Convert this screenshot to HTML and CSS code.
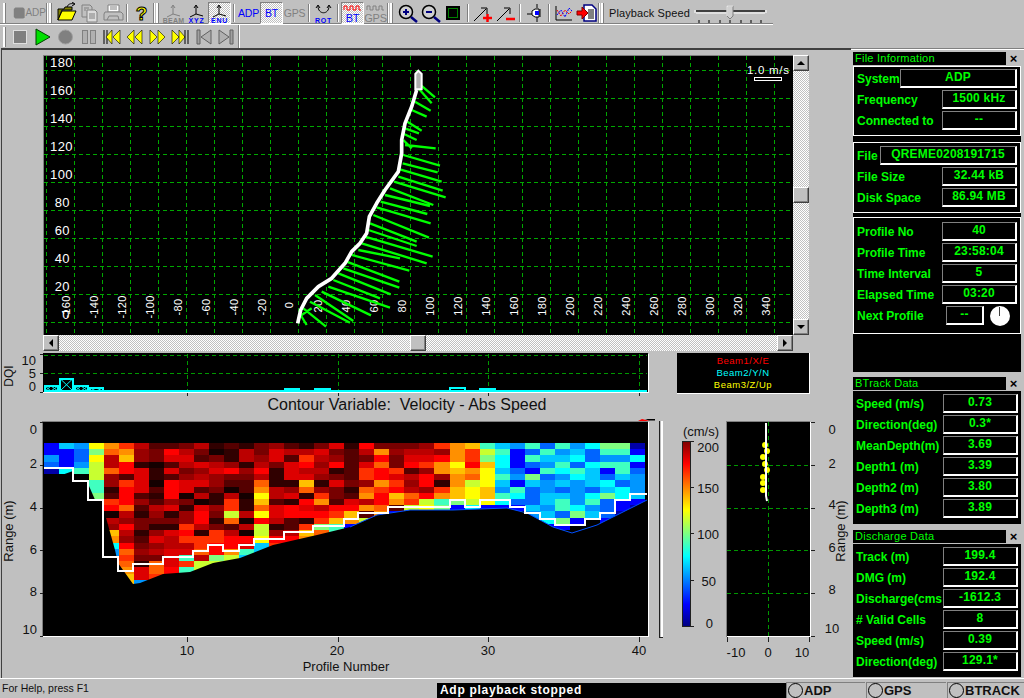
FILE: index.html
```html
<!DOCTYPE html>
<html lang="en">
<head>
<meta charset="utf-8">
<title>ADP Playback</title>
<link rel="stylesheet" href="styles.css">
</head>
<body>
<div class="app">
  <header class="toolbars">
    <div class="tb-row tb-one">
      <span class="grip grip-first"></span>
      <span class="btn btn-adp"><svg class="blob" viewBox="0 0 16 16"><path d="M3 1h10l2 2v11l-2 1H3l-2-2V3z" fill="#808080"/></svg><span class="dis">ADP</span></span>
      <span class="grip grip-double"></span>
      <span class="btn"><svg viewBox="0 0 23 22"><path d="M3 7h6l1-2h7v3H7L3 18z" fill="#808000" stroke="#000"/><path d="M3 18l4-9h14l-4 9z" fill="#ffff00" stroke="#000"/><path d="M12 5c1-3 4-4 7-3M17 0l3 2-3 2" fill="none" stroke="#000"/></svg></span>
      <span class="btn"><svg viewBox="0 0 23 22"><path d="M4 3h8l2 2v10H4z" fill="#c0c0c0" stroke="#808080"/><path d="M9 8h8l2 2v10H9z" fill="#dcdcdc" stroke="#808080"/><path d="M11 12h6M11 14h6M11 16h6M6 6h5M6 8h2" stroke="#808080"/></svg></span>
      <span class="btn"><svg viewBox="0 0 23 22"><path d="M7 3h11v7H7z" fill="#fff" stroke="#808080"/><path d="M4 10h16l2 2v6H3v-6z" fill="#c0c0c0" stroke="#808080"/><path d="M6 18l2-4h9l1 4M9 5h7M9 7h7" fill="none" stroke="#808080"/></svg></span>
      <span class="sep"></span>
      <span class="btn"><svg viewBox="0 0 23 22"><text class="qm" x="11.5" y="18">?</text></svg></span>
      <span class="grip grip-double"></span>
      <span class="btn"><svg viewBox="0 0 23 22"><path d="M11 4v8M11 12l-6 3M11 12l7 2M9 6l2-3 2 3" fill="none" stroke="#808080"/><text class="tag gray" x="11.5" y="21">BEAM</text></svg></span>
      <span class="btn"><svg viewBox="0 0 23 22"><path d="M11 4v8M11 12l-6 3M11 12l7 2M9 6l2-3 2 3" fill="none" stroke="#000"/><text class="tag" x="11.5" y="21">XYZ</text></svg></span>
      <span class="btn pressed"><svg viewBox="0 0 23 22"><path d="M11 4v8M11 12l-6 3M11 12l7 2M9 6l2-3 2 3" fill="none" stroke="#000"/><text class="tag" x="11.5" y="21">ENU</text></svg></span>
      <span class="sep"></span>
      <span class="btn blue">ADP</span>
      <span class="btn blue pressed">BT</span>
      <span class="btn gray-t">GPS</span>
      <span class="sep"></span>
      <span class="btn"><svg viewBox="0 0 23 22"><path d="M6 4c0 9 11 9 11 0M4 6l2-3 2 3M15 6l2-3 2 3" fill="none" stroke="#000"/><text class="tag" x="11.5" y="21">ROT</text></svg></span>
      <span class="sep"></span>
      <span class="btn pressed"><svg viewBox="0 0 23 22"><path d="M3 8V4h3v4h3V4h3v4h3V4h3v4h2" fill="none" stroke="#ff0000"/><text class="wave-t" x="11.5" y="20">BT</text></svg></span>
      <span class="btn"><svg viewBox="0 0 23 22"><path d="M3 8V4h3v4h3V4h3v4h3V4h3v4h2" fill="none" stroke="#808080"/><text class="wave-t gray" x="11.5" y="20">GPS</text></svg></span>
      <span class="grip grip-double"></span>
      <span class="btn"><svg viewBox="0 0 23 22"><circle cx="10" cy="10" r="6.5" fill="#d0d0d0" stroke="#000" stroke-width="1.5"/><path d="M7 10h6M10 7v6" stroke="#000080" stroke-width="2"/><path d="M15 15l6 5" stroke="#000080" stroke-width="2.5"/></svg></span>
      <span class="btn"><svg viewBox="0 0 23 22"><circle cx="10" cy="10" r="6.5" fill="#d0d0d0" stroke="#000" stroke-width="1.5"/><path d="M7 10h6" stroke="#000080" stroke-width="2"/><path d="M15 15l6 5" stroke="#000080" stroke-width="2.5"/></svg></span>
      <span class="btn"><svg viewBox="0 0 23 22"><rect x="4" y="4" width="14" height="14" fill="#000"/><rect x="6.5" y="6.5" width="9" height="9" fill="none" stroke="#00ff00" stroke-dasharray="1 1"/></svg></span>
      <span class="sep"></span>
      <span class="btn"><svg viewBox="0 0 23 22"><path d="M3 19L15 7M10 6h6v6" fill="none" stroke="#000"/><path d="M12 16h9M16.500 12v8" stroke="#ff0000" stroke-width="2.500"/></svg></span>
      <span class="btn"><svg viewBox="0 0 23 22"><path d="M3 19L15 7M10 6h6v6" fill="none" stroke="#000"/><path d="M12 17h9" stroke="#ff0000" stroke-width="2.500"/></svg></span>
      <span class="sep"></span>
      <span class="btn"><svg viewBox="0 0 23 22"><path d="M4 12h5" stroke="#000"/><path d="M9 9l3-2h4v8h-4l-3-2z" fill="#fff" stroke="#000"/><rect x="12" y="9" width="4" height="4" fill="#0000ff"/><path d="M14 2v4M14 15v5M17 7v8" stroke="#000"/></svg></span>
      <span class="sep"></span>
      <span class="btn"><svg viewBox="0 0 23 22"><path d="M4 4v14h16" fill="none" stroke="#000"/><path d="M5 8l4 6 4-6 4 4 3-3" fill="none" stroke="#ff0000" stroke-dasharray="2 1"/><path d="M5 13l4-5 4 7 4-9 3 3" fill="none" stroke="#0000ff" stroke-dasharray="2 1"/></svg></span>
      <span class="btn"><svg viewBox="0 0 23 22"><path d="M9 3h8l4 4v12H9z" fill="#fff" stroke="#000080" stroke-width="1.500"/><path d="M13 8h6M13 10h6M13 12h6M13 14h6M13 16h6" stroke="#000"/><path d="M2 9h5V5l6 6-6 6v-4H2z" fill="#ff0000" stroke="#800000"/></svg></span>
      <span class="grip grip-double"></span>
      <span class="speed-label">Playback Speed</span>
      <svg class="slider" viewBox="0 0 78 22"><path d="M3 9h69" stroke="#404040" stroke-width="2"/><path d="M3 11h69" stroke="#fff"/><path d="M2 8v3M73 8v3" stroke="#fff"/><path d="M34 4h6v10l-3 3-3-3z" fill="#d0d0d0" stroke="#808080"/><path d="M34 4h6M34 4v10" stroke="#fff"/><path d="M6 18v3M16 18v3M27 18v3M37 18v3M48 18v3M58 18v3M68 18v3" stroke="#000"/></svg>
    </div>
    <div class="tb-row tb-two">
      <span class="grip grip-first"></span>
      <span class="btn"><svg viewBox="0 0 23 22"><rect x="5.500" y="4.500" width="13" height="13" fill="#808080" stroke="#e0e0e0"/></svg></span>
      <span class="btn"><svg viewBox="0 0 23 22"><path d="M5 3l14 8-14 8z" fill="#00e000" stroke="#004000"/></svg></span>
      <span class="btn"><svg viewBox="0 0 23 22"><circle cx="11.500" cy="11" r="7" fill="#808080" stroke="#a0a0a0"/></svg></span>
      <span class="btn"><svg viewBox="0 0 23 22"><rect x="5.500" y="4.500" width="5" height="13" fill="#b0b0b0" stroke="#808080"/><rect x="13.500" y="4.500" width="5" height="13" fill="#b0b0b0" stroke="#808080"/></svg></span>
      <span class="btn"><svg viewBox="0 0 23 22"><path d="M4 4v14M7 4v14" stroke="#000"/><path d="M12 4v14l-6-7zM20 4v14l-7-7z" fill="#ffff00" stroke="#000" stroke-width=".6"/></svg></span>
      <span class="btn"><svg viewBox="0 0 23 22"><path d="M11 4v14L4 11zM19 4v14l-7-7z" fill="#ffff00" stroke="#000" stroke-width=".6"/></svg></span>
      <span class="btn"><svg viewBox="0 0 23 22"><path d="M4 4v14l7-7zM12 4v14l7-7z" fill="#ffff00" stroke="#000" stroke-width=".6"/></svg></span>
      <span class="btn"><svg viewBox="0 0 23 22"><path d="M3 4v14l7-7zM10 4v14l6-7z" fill="#ffff00" stroke="#000" stroke-width=".6"/><path d="M16 4v14M19 4v14" stroke="#000"/></svg></span>
      <span class="btn"><svg viewBox="0 0 23 22"><path d="M5 4v14h3V4z" fill="#a0a0a0" stroke="#606060"/><path d="M19 4v14l-10-7z" fill="#b0b0b0" stroke="#606060"/></svg></span>
      <span class="btn"><svg viewBox="0 0 23 22"><path d="M15 4v14h3V4z" fill="#a0a0a0" stroke="#606060"/><path d="M4 4v14l10-7z" fill="#b0b0b0" stroke="#606060"/></svg></span>
      <span class="sep-end"></span>
    </div>
  </header>

  <main class="main">
    <section class="work">
      <div class="chart-top">
        <svg class="vel-plot" viewBox="43 55 750 280">
          <rect x="43" y="55" width="750" height="280"/>
          <path class="frame-dark" d="M43.500 335V55.500H793"/>
          <path class="grid" d="M44 70.500H793M44 98.500H793M44 126.500H793M44 154.500H793M44 182.500H793M44 210.500H793M44 238.500H793M44 266.500H793M44 294.500H793M44 322.500H793"/>
          <path class="grid" d="M46.500 56V335M74.500 56V335M102.500 56V335M130.500 56V335M158.500 56V335M186.500 56V335M214.500 56V335M242.500 56V335M270.500 56V335M298.500 56V335M326.500 56V335M354.500 56V335M382.500 56V335M410.500 56V335M438.500 56V335M466.500 56V335M494.500 56V335M522.500 56V335M550.500 56V335M578.500 56V335M606.500 56V335M634.500 56V335M662.500 56V335M690.500 56V335M718.500 56V335M746.500 56V335M774.500 56V335"/>
          <g class="y-labels">
            <text x="73" y="67">180</text><text x="73" y="95">160</text><text x="73" y="123">140</text><text x="73" y="151">120</text><text x="73" y="179">100</text><text x="70" y="207">80</text><text x="70" y="235">60</text><text x="70" y="263">40</text><text x="70" y="291">20</text><text x="70" y="319">0</text>
          </g>
          <g class="x-labels">
            <text transform="translate(70 307) rotate(-90)">-160</text>
            <text transform="translate(98 307) rotate(-90)">-140</text>
            <text transform="translate(126 307) rotate(-90)">-120</text>
            <text transform="translate(154 307) rotate(-90)">-100</text>
            <text transform="translate(182 307) rotate(-90)">-80</text>
            <text transform="translate(210 307) rotate(-90)">-60</text>
            <text transform="translate(238 307) rotate(-90)">-40</text>
            <text transform="translate(266 307) rotate(-90)">-20</text>
            <text transform="translate(293 305) rotate(-90)">0</text>
            <text transform="translate(322 306) rotate(-90)">20</text>
            <text transform="translate(350 306) rotate(-90)">40</text>
            <text transform="translate(378 306) rotate(-90)">60</text>
            <text transform="translate(406 306) rotate(-90)">80</text>
            <text transform="translate(434 306) rotate(-90)">100</text>
            <text transform="translate(462 306) rotate(-90)">120</text>
            <text transform="translate(490 306) rotate(-90)">140</text>
            <text transform="translate(518 306) rotate(-90)">160</text>
            <text transform="translate(546 306) rotate(-90)">180</text>
            <text transform="translate(574 306) rotate(-90)">200</text>
            <text transform="translate(602 306) rotate(-90)">220</text>
            <text transform="translate(630 306) rotate(-90)">240</text>
            <text transform="translate(658 306) rotate(-90)">260</text>
            <text transform="translate(686 306) rotate(-90)">280</text>
            <text transform="translate(714 306) rotate(-90)">300</text>
            <text transform="translate(742 306) rotate(-90)">320</text>
            <text transform="translate(770 306) rotate(-90)">340</text>
          </g>
          <g transform="translate(270 60) scale(.33333)">
            <path class="vectors" d="M440 65L495 112M445 85L485 130M435 125L482 152M425 150L470 170M412 185L455 212M405 205L447 220M402 222L440 240M400 240L425 265M405 255L497 265M400 285L510 317M398 310L503 337M390 328L515 365M385 350L518 392M372 365L527 412M360 385L490 435M345 405L480 438M332 425L472 462M320 442L482 490M310 465L477 533M300 490L440 545M295 510L440 558M285 530L488 590M275 550L470 610M265 570L390 595M245 585L418 632M230 605L388 665M220 625L388 683M205 640L362 703M190 660L330 715M175 680L360 743M155 695L303 766M135 705L250 783M120 725L240 788M100 745L168 800M92 765L110 795M125 745L95 765"/>
            <path class="track" d="M83 790L92 750L110 715L145 680L185 655L225 610L245 575L270 550L290 520L298 470L320 430L345 390L385 335L395 280L395 240L405 190L425 140L440 90"/>
            <path class="boat" d="M436 88V42L445 32L455 42V88Z"/>
          </g>
          <text class="scale-t" x="747" y="74">1.0 m/s</text>
          <rect class="scale-bar" x="754.500" y="77.500" width="27" height="3"/>
        </svg>
        <div class="vscroll">
          <span class="arrow up"></span>
          <span class="track-fill"></span>
          <span class="thumb-v"></span>
          <span class="track-fill"></span>
          <span class="arrow down"></span>
        </div>
        <div class="hscroll">
          <span class="arrow left"></span>
          <span class="track-fill"></span>
          <span class="thumb-h"></span>
          <span class="track-fill"></span>
          <span class="arrow right"></span>
        </div>
      </div>

      <div class="dqi-row">
        <svg class="dqi" viewBox="2 351 675 46">
          <rect x="43" y="353" width="605" height="39"/>
          <path class="frame-light" d="M43 392.500H648.500V354"/>
          <path class="grid-s" d="M44 355.500H647M44 373.500H647M187.500 354V392M338.500 354V392M488.500 354V392M639.500 354V392"/>
          <path class="bars" d="M45 386H58V391H45ZM60 378.500H73V391H60ZM75 386H88V391H75ZM90 388H103V391H90ZM285 389H299V391H285ZM315 389H330V391H315ZM450 388H465V391H450ZM480 389H495V391H480Z"/>
          <path class="bars thin" d="M45 386L51 391L58 386M45 391L51 386L58 391M60 378.500L73 391M60 391L73 378.500M75 386L81 391L88 386M75 391L81 386L88 391M90 388L96 391L103 388"/>
          <path class="bars" d="M104 390.500H647"/>
          <path class="ticks" d="M40 354.500H43M40 373.500H43M40 392.500H43M187.500 393V396M338.500 393V396M488.500 393V396M639.500 393V396"/>
          <g class="dark-t">
            <text class="end" x="36" y="365">10</text><text class="end" x="36" y="378">5</text><text class="end" x="36" y="391">0</text>
            <text class="mid small" transform="translate(13 376) rotate(-90)">DQI</text>
          </g>
        </svg>
        <div class="legend">
          <span class="l-red">Beam1/X/E</span>
          <span class="l-cyan">Beam2/Y/N</span>
          <span class="l-yellow">Beam3/Z/Up</span>
        </div>
      </div>

      <h2 class="contour-title">Contour Variable:&nbsp; Velocity - Abs Speed</h2>

      <svg class="contour" viewBox="2 414 849 264">
        <defs>
          <linearGradient id="jet" x1="0" y1="0" x2="0" y2="1">
            <stop offset="0" stop-color="#7f0000"/>
            <stop offset=".12" stop-color="#ff0000"/>
            <stop offset=".37" stop-color="#ffff00"/>
            <stop offset=".62" stop-color="#00ffff"/>
            <stop offset=".88" stop-color="#0000ff"/>
            <stop offset="1" stop-color="#00007f"/>
          </linearGradient>
        </defs>
        <rect x="43" y="421" width="605" height="216"/>
        <g id="heat" class="heat"></g>
        <path class="bed" d="M43 476L59 476L73 471L73 476L84 478L89 486L96 502L103 507L110 532L115 550L118 563L133 584L140 583L163 574L190 572L213 563L240 558L273 545L317 535L350 527L377 515L410 510L453 510L507 508L527 513L553 527L572 533L597 525L647 500V636H43Z"/>
        <path class="edge" d="M350 527L377 515L410 510L453 510L507 508L527 513L553 527L572 533L597 525L647 500"/>
        <path class="contour-line" d="M44 468H73V481H88V500H103V557H118V571H133V564H163V557H193V551H208V545H223V551H239V545H254V539H284V532H313V526H344V519H358V513H388V507H450V500H465V507H480V500H510V507H525V513H540V519H555V525H585V519H600V513H615V500H630V494H647"/>
        <path class="frame-dark" d="M42.500 637V421.500H648"/>
        <path class="frame-light" d="M43 636.500H648.500V422"/>
        <path class="red-mark" d="M632 421h6l4-2 4 1 4 1z"/>
        <path class="black-mark" d="M645 419h10v1.500h-6z"/>
        <path class="strip" d="M660 421H659.500V637H663"/>
        <path class="strip-w" d="M662 421V637"/>
        <path class="ticks" d="M40 422.500H43M40 465.500H43M40 508.500H43M40 550.500H43M40 593.500H43M40 636.500H43M187.500 637V642M338.500 637V642M488.500 637V642M639.500 637V642"/>
        <g class="dark-t">
          <text class="end" x="37" y="434">0</text><text class="end" x="37" y="468">2</text><text class="end" x="37" y="511">4</text><text class="end" x="37" y="554">6</text><text class="end" x="37" y="596">8</text><text class="end" x="37" y="634">10</text>
          <text class="mid" transform="translate(13 531) rotate(-90)">Range (m)</text>
          <text class="mid" x="187" y="655">10</text><text class="mid" x="337" y="655">20</text><text class="mid" x="488" y="655">30</text><text class="mid" x="639" y="655">40</text>
          <text class="mid" x="346" y="671">Profile Number</text>
          <text class="mid" x="701" y="436">(cm/s)</text>
          <text class="end" x="719" y="452">200</text><text class="end" x="719" y="493">150</text><text class="end" x="719" y="539">100</text><text class="end" x="716" y="586">50</text><text class="end" x="713" y="628">0</text>
          <text class="mid" x="832" y="434">0</text><text class="mid" x="832" y="468">2</text><text class="mid" x="832" y="509">4</text><text class="mid" x="832" y="552">6</text><text class="mid" x="832" y="594">8</text><text class="mid" x="832" y="633">10</text>
          <text class="mid" transform="translate(845 531) rotate(-90)">Range (m)</text>
          <text class="mid" x="736" y="657">-10</text><text class="mid" x="768" y="657">0</text><text class="mid" x="802" y="657">10</text>
        </g>
        <rect class="cbar" x="682.500" y="441.500" width="8" height="185" fill="url(#jet)"/>
        <path class="ticks" d="M691 441.500H694M691 487.500H694M691 533.500H694M691 580.500H694M691 626.500H694"/>
        <rect x="726" y="421" width="84" height="216"/>
        <path class="grid-s" d="M727 465.500H810M727 508.500H810M727 550.500H810M727 593.500H810M768.500 422V636"/>
        <g class="yellow-dots">
          <circle cx="765" cy="445" r="3"/><circle cx="767" cy="451" r="3"/><circle cx="763" cy="457" r="3"/><circle cx="765" cy="464" r="3"/><circle cx="767" cy="470" r="3"/><circle cx="763" cy="477" r="3"/><circle cx="763" cy="483" r="3"/><circle cx="763" cy="490" r="3"/>
        </g>
        <path class="mini-track" d="M766 423V496L767 501"/>
        <path class="frame-dark" d="M726.500 637V421.500H810"/>
        <path class="frame-light" d="M727 636.500H810.500V422"/>
        <path class="ticks" d="M811 422.500H815M811 465.500H815M811 508.500H815M811 550.500H815M811 593.500H815M811 636.500H815M727.500 637V642M768.500 637V642M809.500 637V642"/>
      </svg>
    </section>

    <aside class="sidebar">
      <section class="panel panel-file">
        <div class="p-title"><span class="p-name">File Information</span><span class="p-close">×</span></div>
        <div class="p-body">
          <div class="group g-conn">
            <div class="row"><span class="lbl">System</span><span class="val val-wide">ADP</span></div>
            <div class="row"><span class="lbl">Frequency</span><span class="val">1500 kHz</span></div>
            <div class="row"><span class="lbl">Connected to</span><span class="val">--</span></div>
          </div>
          <div class="group g-file">
            <div class="row"><span class="lbl">File</span><span class="val val-file">QREME0208191715</span></div>
            <div class="row"><span class="lbl">File Size</span><span class="val">32.44 kB</span></div>
            <div class="row"><span class="lbl">Disk Space</span><span class="val">86.94 MB</span></div>
          </div>
          <div class="group g-prof">
            <div class="row"><span class="lbl">Profile No</span><span class="val">40</span></div>
            <div class="row"><span class="lbl">Profile Time</span><span class="val">23:58:04</span></div>
            <div class="row"><span class="lbl">Time Interval</span><span class="val">5</span></div>
            <div class="row"><span class="lbl">Elapsed Time</span><span class="val">03:20</span></div>
            <div class="row"><span class="lbl">Next Profile</span><span class="val val-next">--</span><svg class="clock" viewBox="0 0 22 22"><circle cx="11" cy="11" r="10" fill="#fff"/><path d="M10.500 11V2" stroke="#404040"/></svg></div>
          </div>
        </div>
      </section>
      <section class="panel panel-bt">
        <div class="p-title"><span class="p-name">BTrack Data</span><span class="p-close">×</span></div>
        <div class="p-body data">
          <div class="row"><span class="lbl">Speed (m/s)</span><span class="val">0.73</span></div>
          <div class="row"><span class="lbl">Direction(deg)</span><span class="val">0.3*</span></div>
          <div class="row"><span class="lbl">MeanDepth(m)</span><span class="val">3.69</span></div>
          <div class="row"><span class="lbl">Depth1 (m)</span><span class="val">3.39</span></div>
          <div class="row"><span class="lbl">Depth2 (m)</span><span class="val">3.80</span></div>
          <div class="row"><span class="lbl">Depth3 (m)</span><span class="val">3.89</span></div>
        </div>
      </section>
      <section class="panel panel-dis">
        <div class="p-title"><span class="p-name">Discharge Data</span><span class="p-close">×</span></div>
        <div class="p-body data">
          <div class="row"><span class="lbl">Track (m)</span><span class="val">199.4</span></div>
          <div class="row"><span class="lbl">DMG (m)</span><span class="val">192.4</span></div>
          <div class="row"><span class="lbl">Discharge(cms</span><span class="val">-1612.3</span></div>
          <div class="row"><span class="lbl"># Valid Cells</span><span class="val">8</span></div>
          <div class="row"><span class="lbl">Speed (m/s)</span><span class="val">0.39</span></div>
          <div class="row"><span class="lbl">Direction(deg)</span><span class="val">129.1*</span></div>
        </div>
      </section>
    </aside>
  </main>

  <footer class="status">
    <span class="st-help">For Help, press F1</span>
    <span class="st-msg">Adp playback stopped</span>
    <span class="st-pane st-adp"><i class="led"></i>ADP</span>
    <span class="st-pane st-gps"><i class="led"></i>GPS</span>
    <span class="st-pane st-bt"><i class="led"></i>BTRACK</span>
  </footer>
</div>
<script src="heatmap.js"></script>
</body>
</html>
```

FILE: styles.css
```css
* { box-sizing: border-box; }
html, body { margin: 0; padding: 0; }
body {
  width: 1024px;
  height: 698px;
  overflow: hidden;
  background: #c0c0c0;
  font-family: "Liberation Sans", Arial, sans-serif;
  color: #000;
}
.app { display: flex; flex-direction: column; width: 1024px; height: 698px; }

/* toolbars */
.toolbars { height: 48px; flex: none; }
.tb-row { display: flex; align-items: center; }
.tb-one {
  height: 25px;
  width: 773px;
  padding-top: 1px;
  border-bottom: 1px solid #ffffff;
  box-shadow: inset 0 -1px 0 #808080;
}
.tb-two { height: 23px; }
.btn {
  flex: none;
  width: 23px;
  height: 22px;
  display: flex;
  align-items: center;
  justify-content: center;
  font-size: 10.500px;
  letter-spacing: -.2px;
}
.btn svg { width: 23px; height: 22px; display: block; }
.btn-adp { width: 35px; margin-left: 3px; justify-content: flex-start; padding-left: 2px; }
.btn-adp .blob { width: 16px; height: 16px; }
.dis { color: #808080; font-size: 10px; letter-spacing: 0; }
.pressed {
  border: 1px solid;
  border-color: #808080 #ffffff #ffffff #808080;
  background-color: #c0c0c0;
  background-image: conic-gradient(#ffffff 25%, #c0c0c0 0 50%, #ffffff 0 75%, #c0c0c0 0);
  background-size: 2px 2px;
}
.pressed svg { margin: -1px; flex: none; }
.blue { color: #0000ff; }
.gray-t { color: #808080; }
.grip { flex: none; height: 20px; }
.grip-first { margin-left: 3px; border-left: 2px solid #fff; border-right: 1px solid #808080; width: 3px; margin-right: 2px; }
.grip-double {
  width: 8px;
  margin-right: 1px;
  background:
    linear-gradient(90deg, #808080 0 1px, #fff 1px 2px, #c0c0c0 2px 3px, #fff 3px 5px, #808080 5px 6px, transparent 6px);
}
.sep { flex: none; width: 2px; height: 18px; margin: 0 2px; border-left: 1px solid #808080; border-right: 1px solid #fff; }
.sep-end { flex: none; width: 2px; height: 23px; border-left: 1px solid #808080; border-right: 1px solid #fff; }
.speed-label { flex: none; font-size: 11px; letter-spacing: .1px; margin-left: 2px; width: 84px; white-space: nowrap; color: #111; }
.slider { flex: none; width: 78px; height: 22px; }
.qm { font: bold 19px "Liberation Sans", sans-serif; fill: #ffff00; stroke: #000; stroke-width: 1; text-anchor: middle; }
.tag { font: bold 7px "Liberation Sans", sans-serif; fill: #0000ff; text-anchor: middle; letter-spacing: .8px; }
.tag.gray { fill: #808080; letter-spacing: .2px; }
.wave-t { font: 11px "Liberation Sans", sans-serif; fill: #0000ff; text-anchor: middle; }
.wave-t.gray { fill: #808080; }

/* main */
.main { display: flex; flex: none; height: 630px; }
.work {
  flex: none;
  width: 850px;
  margin-left: 1px;
  border-top: 2px solid #404040;
  border-left: 1px solid #404040;
  display: flex;
  flex-direction: column;
}
.chart-top {
  margin: 5px 0 0 41px;
  display: grid;
  grid-template-columns: 750px 16px;
  grid-template-rows: 280px 16px;
}
.vel-plot { display: block; width: 750px; height: 280px; grid-column: 1; grid-row: 1; }
.vel-plot text { font-family: "Liberation Sans", Arial, sans-serif; fill: #fff; }
.y-labels text { font-size: 13px; text-anchor: end; letter-spacing: .4px; }
.x-labels text { font-size: 11px; text-anchor: middle; letter-spacing: .3px; }
.scale-t { font-size: 11.500px; letter-spacing: .7px; }
.scale-bar { fill: #000; stroke: #fff; }
.grid { fill: none; stroke: #00a800; stroke-dasharray: 4 3; shape-rendering: crispEdges; }
.grid-s { fill: none; stroke: #009800; stroke-dasharray: 4 3; shape-rendering: crispEdges; }
.vectors { fill: none; stroke: #00ff00; stroke-width: 7; }
.track { fill: none; stroke: #fff; stroke-width: 11; stroke-linejoin: round; }
.boat { fill: #b0b0b0; stroke: #fff; stroke-width: 6; }
.frame-dark { fill: none; stroke: #808080; shape-rendering: crispEdges; }
.frame-light { fill: none; stroke: #fff; stroke-width: 1; shape-rendering: crispEdges; }
.vscroll {
  grid-column: 2;
  grid-row: 1;
  width: 16px;
  display: flex;
  flex-direction: column;
}
.hscroll {
  grid-column: 1;
  grid-row: 2;
  display: flex;
  height: 16px;
}
.track-fill {
  flex: 1;
  background-color: #c0c0c0;
  background-image: conic-gradient(#ffffff 25%, #c0c0c0 0 50%, #ffffff 0 75%, #c0c0c0 0);
  background-size: 2px 2px;
}
.arrow, .thumb-v, .thumb-h {
  flex: none;
  background: #c0c0c0;
  border: 1px solid;
  border-color: #ffffff #404040 #404040 #ffffff;
  box-shadow: inset -1px -1px 0 #808080;
  position: relative;
}
.arrow { width: 16px; height: 16px; }
.thumb-v { height: 16px; width: 16px; }
.thumb-h { width: 16px; height: 16px; }
.vscroll .track-fill:first-of-type { flex: 0 0 117px; }
.hscroll .track-fill:first-of-type { flex: 0 0 352px; }
.arrow::before {
  content: "";
  position: absolute;
  left: 50%;
  top: 50%;
  border: 4px solid transparent;
}
.arrow.up::before { border-bottom-color: #000; transform: translate(-50%, -75%); }
.arrow.down::before { border-top-color: #000; transform: translate(-50%, -25%); }
.arrow.left::before { border-right-color: #000; transform: translate(-75%, -50%); }
.arrow.right::before { border-left-color: #000; transform: translate(-25%, -50%); }

/* DQI */
.dqi-row { display: flex; height: 46px; flex: none; }
.dqi { display: block; width: 675px; height: 46px; flex: none; }
.bars { fill: none; stroke: #00ffff; stroke-width: 2; shape-rendering: crispEdges; }
.bars.thin { stroke-width: 1; shape-rendering: auto; }
.ticks { fill: none; stroke: #202020; shape-rendering: crispEdges; }
.dark-t text { font: 13px "Liberation Sans", Arial, sans-serif; fill: #111; }
.dark-t .small { font-size: 12px; }
.dark-t .end { text-anchor: end; }
.dark-t .mid { text-anchor: middle; }
.legend {
  flex: none;
  width: 133px;
  height: 41px;
  margin-top: 2px;
  background: #000;
  border-right: 1px solid #fff;
  border-bottom: 1px solid #fff;
  display: flex;
  flex-direction: column;
  align-items: center;
  justify-content: center;
  font-size: 9.500px;
  line-height: 12px;
  letter-spacing: .5px;
}
.l-red { color: #ff0000; }
.l-cyan { color: #00ffff; }
.l-yellow { color: #ffff00; }
.contour-title {
  flex: none;
  margin: 0;
  height: 17px;
  width: 810px;
  text-align: center;
  font-size: 16px;
  font-weight: normal;
  line-height: 15px;
  color: #111;
}
.contour { display: block; width: 849px; height: 264px; flex: none; }
.heat rect { shape-rendering: crispEdges; }
.bed { fill: #000; }
.edge { fill: none; stroke: #0050ff; stroke-width: 1; }
.contour-line { fill: none; stroke: #fff; stroke-width: 2; shape-rendering: crispEdges; }
.red-mark { fill: #ff0000; }
.black-mark { fill: #000; }
.strip { fill: none; stroke: #202020; shape-rendering: crispEdges; }
.strip-w { fill: none; stroke: #fff; stroke-width: 2; shape-rendering: crispEdges; }
.cbar { stroke: #202020; }
.yellow-dots circle { fill: #ffff00; }
.mini-track { fill: none; stroke: #fff; stroke-width: 2; }

/* sidebar */
.sidebar {
  flex: none;
  width: 173px;
  padding: 3px 3px 0 2px;
  border-top: 1px solid #808080;
  box-shadow: inset 0 1px 0 #fff;
  display: flex;
  flex-direction: column;
}
.panel { width: 168px; flex: none; }
.panel-file { height: 320px; }
.panel-bt { height: 147px; margin-top: 5px; }
.panel-dis { height: 147px; margin-top: 6px; }
.p-title { display: flex; height: 14px; border-bottom: 1px solid #c0c0c0; }
.p-name {
  flex: 1;
  background: #000;
  color: #00ff00;
  font-size: 11px;
  line-height: 13px;
  padding-left: 2px;
  letter-spacing: .25px;
}
.p-close { flex: none; width: 15px; text-align: center; font-weight: bold; font-size: 13px; line-height: 13px; }
.p-body { background: #000; height: calc(100% - 14px); }
.group { border: 1px solid #fff; padding: 2px 3px 0 3px; margin-bottom: 6px; }
.g-conn { height: 70px; }
.g-file { height: 71px; padding-top: 3px; margin-bottom: 4px; }
.g-prof { height: 117px; padding-top: 4px; margin-bottom: 0; }
.row {
  display: flex;
  align-items: center;
  justify-content: space-between;
  height: 19px;
  margin-bottom: 2px;
}
.lbl, .val {
  color: #00ff00;
  font-size: 12px;
  font-weight: bold;
  white-space: nowrap;
}
.val {
  flex: none;
  width: 75px;
  height: 19px;
  margin-left: auto;
  text-align: center;
  line-height: 15px;
  letter-spacing: .2px;
  border: 1px solid;
  border-color: #808080 #fff #fff #808080;
  border-width: 1px 2px 2px 1px;
}
.val-wide { width: 117px; }
.val-file { width: 137px; }
.val-next { width: 38px; margin-right: 5px; }
.clock { width: 22px; height: 22px; flex: none; margin-right: 6px; }
.data { padding: 3px 0 0 3px; }
.data .row { padding-right: 3px; }

/* status */
.status { display: flex; flex: none; height: 20px; border-top: 1px solid #fff; }
.st-help { flex: none; width: 437px; font-size: 10.500px; line-height: 19px; padding-left: 2px; color: #111; }
.st-msg {
  flex: none;
  width: 349px;
  height: 15px;
  margin-top: 4px;
  background: #000;
  color: #fff;
  font-weight: bold;
  font-size: 12px;
  letter-spacing: .7px;
  line-height: 15px;
  padding-left: 3px;
}
.st-pane {
  flex: none;
  height: 16px;
  margin-top: 3px;
  display: flex;
  align-items: center;
  gap: 1px;
  font-weight: bold;
  font-size: 13px;
  border-top: 1px solid #808080;
  border-left: 1px solid #808080;
  padding-left: 1px;
  color: #111;
}
.st-adp { width: 79px; }
.st-gps { width: 80px; margin-left: 1px; }
.st-bt { width: 78px; margin-left: 1px; }
.led { display: block; width: 15px; height: 15px; border: 1px solid #000; border-radius: 50%; flex: none; }
```

FILE: heatmap.js
```js
// Velocity contour: one letter per cell, coloured on a jet ramp.
var palette = {
  a: "#0000a8", b: "#0000ff", c: "#0064ff", d: "#0096ff", e: "#00c8ff", f: "#00ffff",
  g: "#40ffc0", h: "#80ff80", i: "#c8ff30", j: "#ffff00", k: "#ffc000", l: "#ff9000",
  m: "#ff6000", n: "#ff3000", o: "#ff0000", p: "#dd0000", q: "#bb0000", r: "#990000",
  s: "#770000", t: "#550000", u: "#300000", v: "#140000"
};
var rows = [
  "bedjlnqttsqutusrtusp" + "uosssrnlkgedgcgdfhha",
  "bbchmlrsoqsvuqspqqps" + "tqlrqqrlnigbcgdecggb",
  "dbcjqkrspptsuqrptnqr" + "tsosppolnhfbgeefcddf",
  "cbdiqouvtqpqruqsporo" + "tpmsonljokfbcdgcfggb",
  "afgimopupsrporoupqqu" + "tnontrlkljecbgfgebgc",
  "...irtputrqrssqupprs" + "tnopqorlmjgdhcdfeced",
  "...grnpvopprttmuukup" + "srlnroulijebededefcd",
  "...guoptoptsvtlqrmrs" + "umnoqrnkjkdgcdcdcefd",
  "...htotuovquqvjqpuns" + "tlokmolkjkgfceedfhfe",
  "....nortrsvunuktuolt" + "pqolnighijfccegdgcbb",
  "....omtqpuprnumpopqo" + "olmtijhbfbbbedgfdcba",
  "....vqururosiqjpooon" + "ktlbaaa.....dechecaa",
  "....qrsssroumvoqtunk" + "lia.........dfhb.b..",
  "....rosuunqstqiutnhg" + "b...........dbb.....",
  "....kqurpounqvirqkmg",
  "....lrtpqnnnoojoolnh",
  "....fosrqqnoopenokif",
  "....dmrqppmolgelkhfe",
  "....dnsspgqhieehgfed",
  "....dmumpniigg",
  "....dlpmogig",
  "....dkpnia",
  "....akda"
];
var heat = document.getElementById("heat");
var NS = "http://www.w3.org/2000/svg";
rows.forEach(function (row, r) {
  for (var c = 0; c < row.length; c++) {
    var colour = palette[row[c]];
    if (!colour) continue;
    var cell = document.createElementNS(NS, "rect");
    var x0 = Math.round(43.7 + 15.03 * c);
    var x1 = Math.round(43.7 + 15.03 * (c + 1));
    var y0 = Math.round(443 + 6.22 * r);
    var y1 = Math.round(443 + 6.22 * (r + 1));
    cell.setAttribute("x", x0);
    cell.setAttribute("y", y0);
    cell.setAttribute("width", x1 - x0);
    cell.setAttribute("height", y1 - y0);
    cell.setAttribute("fill", colour);
    heat.appendChild(cell);
  }
});
```
